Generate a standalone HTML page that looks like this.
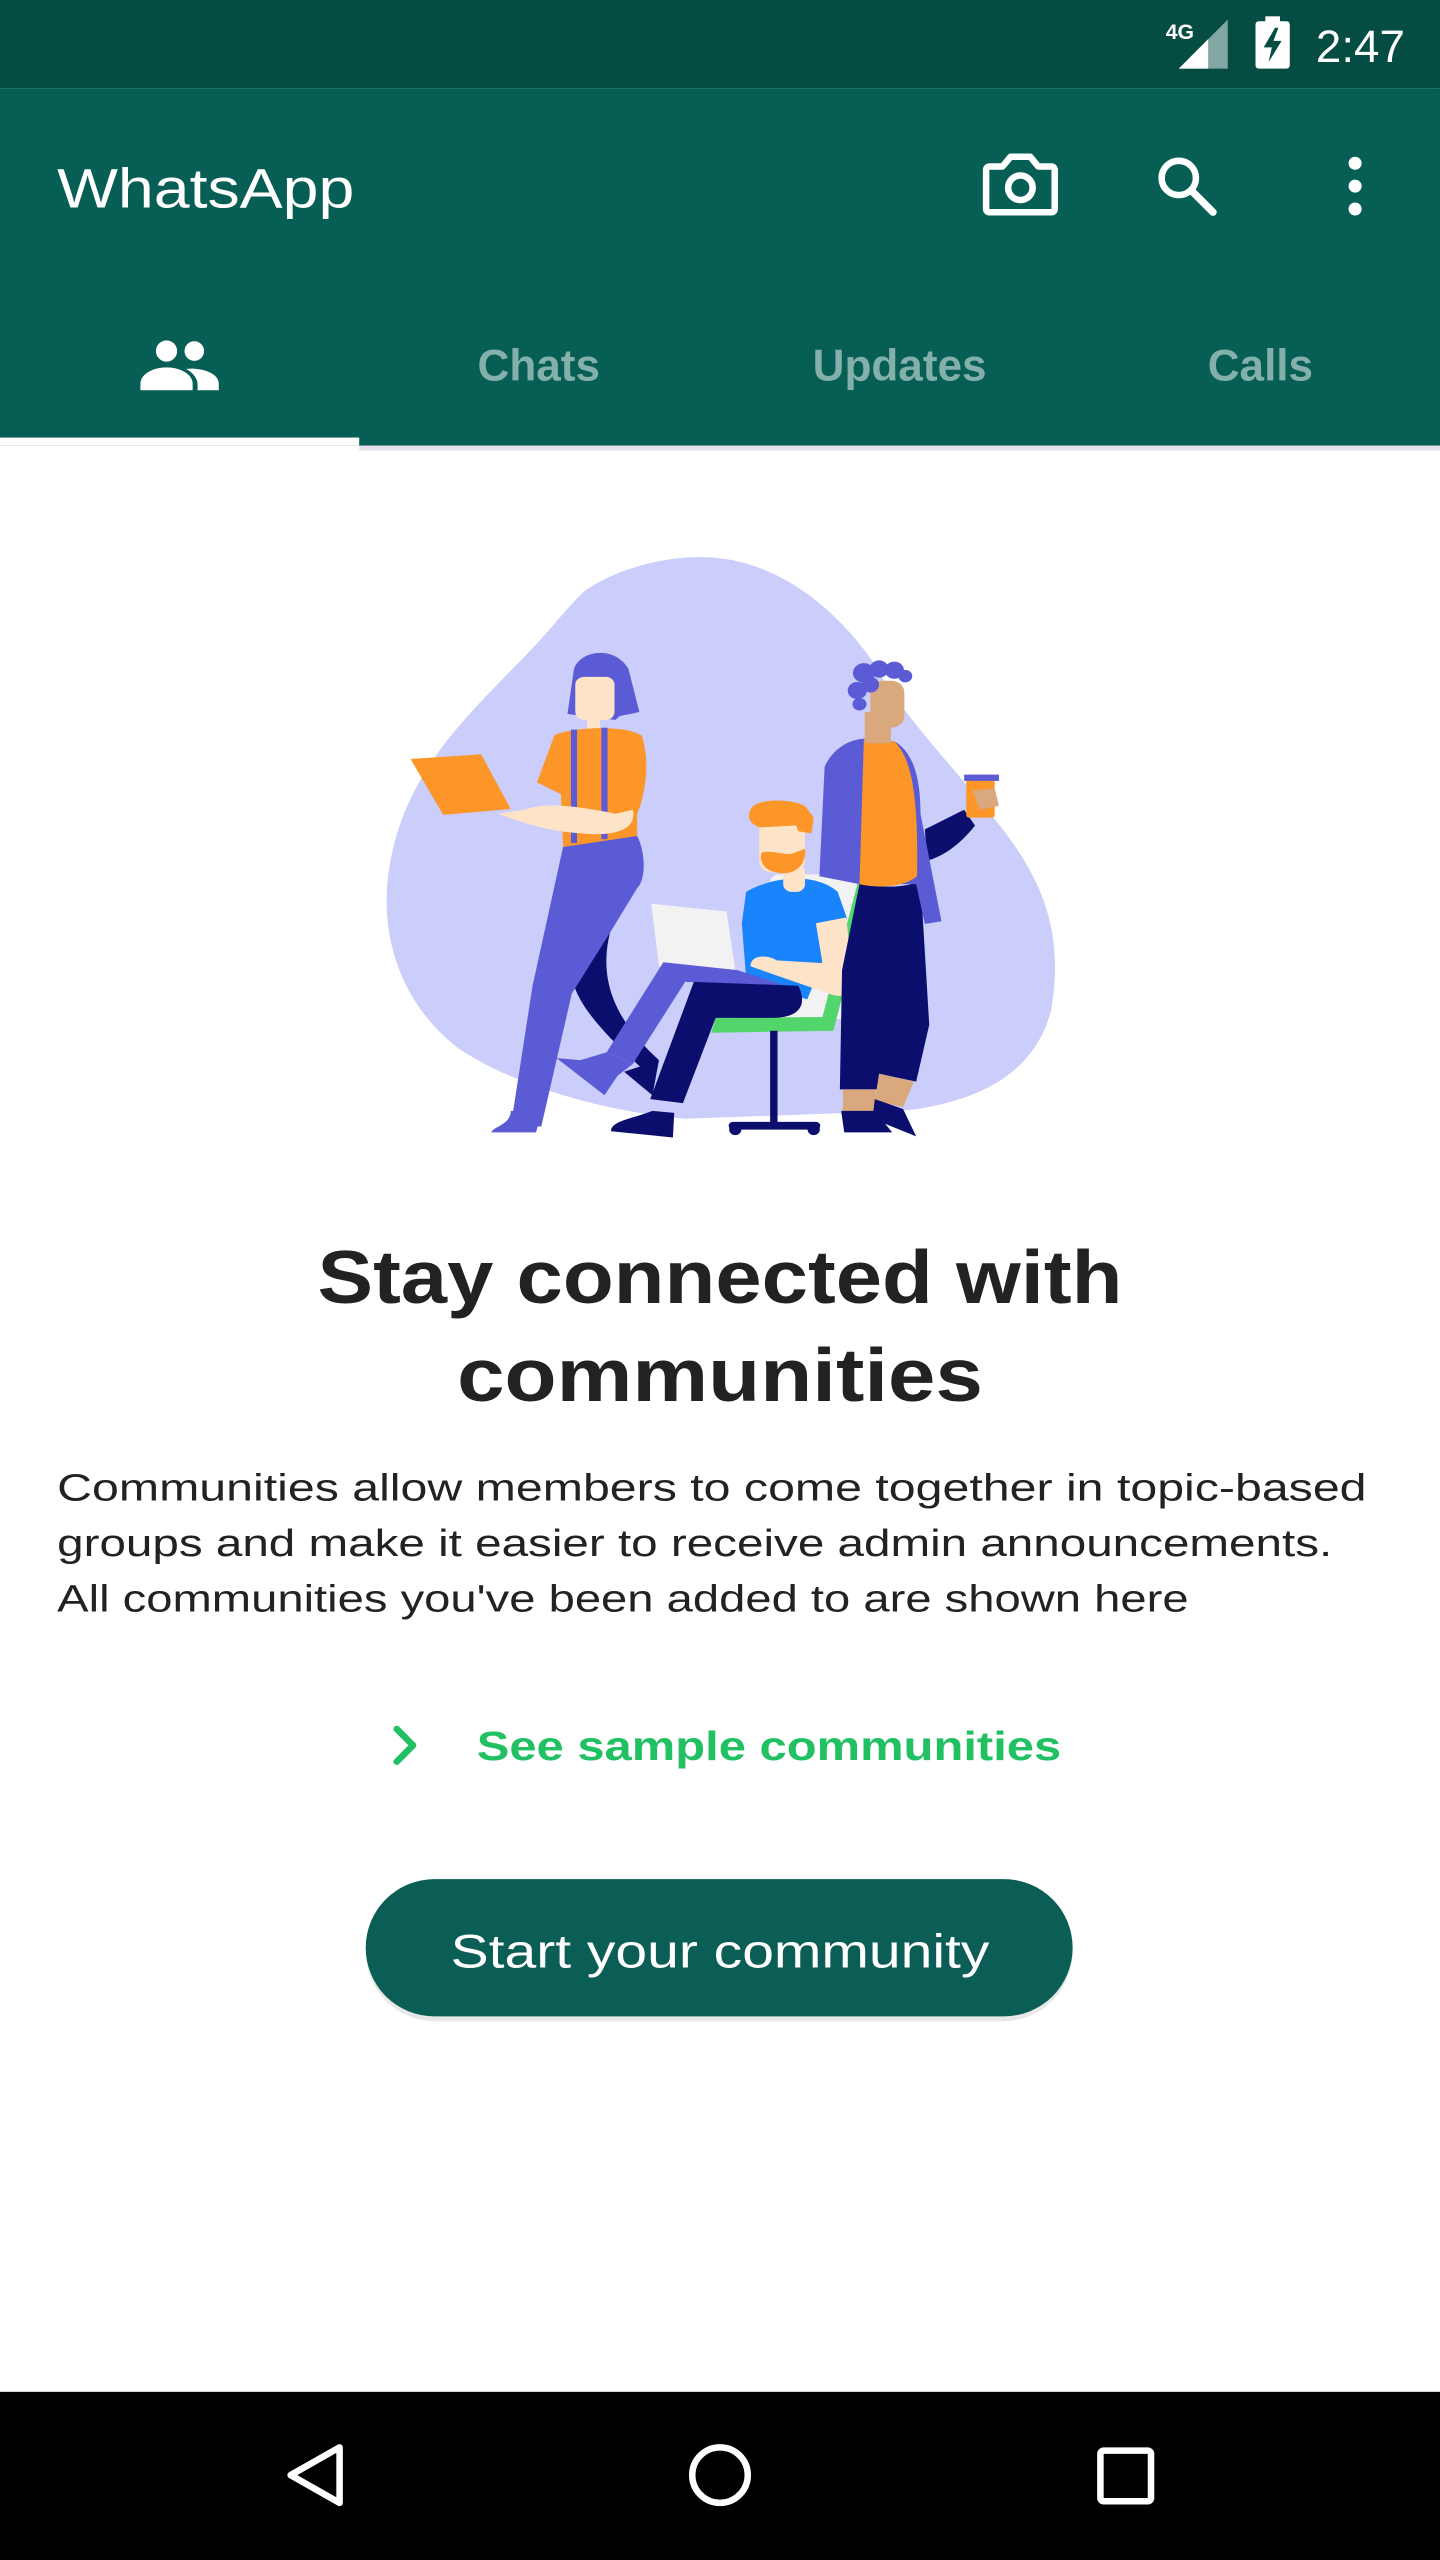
<!DOCTYPE html>
<html><head><meta charset="utf-8"><style>
html,body{margin:0;padding:0;width:1440px;height:2560px;overflow:hidden;background:#fff}
svg{display:block}
text{font-family:"Liberation Sans",sans-serif}
</style></head><body>
<svg width="1440" height="2560" viewBox="0 0 1440 2560" xmlns="http://www.w3.org/2000/svg">
<g transform="scale(1.63265)">
  <rect x="0" y="0" width="882" height="54" fill="#054c43"/>
  <rect x="0" y="54" width="882" height="219" fill="#075e54"/>
  <rect x="0" y="268" width="220" height="5" fill="#fff"/>
  <rect x="220" y="273" width="662" height="3" fill="#e8e0ec"/>
  <text x="714" y="24" font-size="13" font-weight="700" fill="#fff">4G</text>
  <polygon points="722,42 752,42 752,12" fill="#fff" opacity="0.5"/>
  <polygon points="722,42 740,42 740,24" fill="#fff"/>
  <rect x="769" y="13" width="21" height="29" rx="2" fill="#fff"/>
  <rect x="775" y="10" width="9" height="4" fill="#fff"/>
  <polygon points="781,17 774,29 779,29 777,38 785,25 780,25 783,17" fill="#054c43"/>
  <text x="806" y="38" font-size="28" fill="#fff">2:47</text>
  <text x="35" y="127" font-size="34" font-weight="500" fill="#fff" textLength="182" lengthAdjust="spacingAndGlyphs">WhatsApp</text>
  <path d="M606 102 h8 l5 -6 h12 l5 6 h8 a2 2 0 0 1 2 2 v24 a2 2 0 0 1 -2 2 h-38 a2 2 0 0 1 -2 -2 v-24 a2 2 0 0 1 2 -2z" fill="none" stroke="#fff" stroke-width="4" stroke-linejoin="round"/>
  <circle cx="625" cy="115" r="7.5" fill="none" stroke="#fff" stroke-width="4"/>
  <circle cx="722" cy="109" r="10.5" fill="none" stroke="#fff" stroke-width="4"/>
  <line x1="730" y1="117" x2="743" y2="130" stroke="#fff" stroke-width="4.5" stroke-linecap="round"/>
  <circle cx="830" cy="100" r="4" fill="#fff"/><circle cx="830" cy="114" r="4" fill="#fff"/><circle cx="830" cy="128" r="4" fill="#fff"/>
  <circle cx="102" cy="215" r="6.5" fill="#fff"/>
  <circle cx="119" cy="215" r="6" fill="#fff"/>
  <path d="M86 239 v-4 c0 -6 8 -10 16 -10 s16 4 16 10 v4z" fill="#fff"/>
  <path d="M114 226 c8 -1 20 2 20 9 v4 h-13 v-4 c0 -3 -3 -7 -7 -9z" fill="#fff"/>
  <text x="330" y="233" font-size="27" font-weight="700" fill="#83b0aa" text-anchor="middle">Chats</text>
  <text x="551" y="233" font-size="27" font-weight="700" fill="#83b0aa" text-anchor="middle">Updates</text>
  <text x="772" y="233" font-size="27" font-weight="700" fill="#83b0aa" text-anchor="middle">Calls</text>
  <text x="441" y="798" font-size="46" font-weight="700" fill="#222" text-anchor="middle" textLength="493" lengthAdjust="spacingAndGlyphs">Stay connected with</text>
  <text x="441" y="858" font-size="46" font-weight="700" fill="#222" text-anchor="middle" textLength="322" lengthAdjust="spacingAndGlyphs">communities</text>
  <text x="35" y="919" font-size="23" fill="#222" textLength="802" lengthAdjust="spacingAndGlyphs">Communities allow members to come together in topic-based</text>
  <text x="35" y="953" font-size="23" fill="#222" textLength="781" lengthAdjust="spacingAndGlyphs">groups and make it easier to receive admin announcements.</text>
  <text x="35" y="987" font-size="23" fill="#222" textLength="693" lengthAdjust="spacingAndGlyphs">All communities you've been added to are shown here</text>
  <path d="M243 1059 l10 10 l-10 10" fill="none" stroke="#21c063" stroke-width="4" stroke-linecap="round" stroke-linejoin="round"/>
  <text x="292" y="1078" font-size="25" font-weight="700" fill="#21c063" textLength="358" lengthAdjust="spacingAndGlyphs">See sample communities</text>
  <rect x="224" y="1153" width="433" height="85" rx="42.5" fill="#d9d9d9" opacity="0.6"/>
  <rect x="224" y="1151" width="433" height="84" rx="42" fill="#0b5e55"/>
  <text x="441" y="1205" font-size="29" fill="#fff" text-anchor="middle" textLength="330" lengthAdjust="spacingAndGlyphs">Start your community</text>
  <rect x="0" y="1465" width="882" height="103" fill="#000"/>
  <path d="M208 1499 L178 1516 L208 1533 Z" fill="none" stroke="#fff" stroke-width="4" stroke-linejoin="round"/>
  <circle cx="441" cy="1516" r="17" fill="none" stroke="#fff" stroke-width="4"/>
  <rect x="674" y="1501" width="31" height="31" rx="2" fill="none" stroke="#fff" stroke-width="4"/>
</g>
<svg x="380" y="540" width="680" height="610" viewBox="0 0 1560 1560" preserveAspectRatio="none" overflow="visible">
  <path d="M470,130 C560,60 700,30 800,50 C950,80 1060,200 1130,310 C1200,450 1300,560 1400,700 C1520,860 1570,1000 1540,1200 C1500,1380 1350,1440 1200,1460 L700,1480 C500,1460 300,1390 180,1300 C40,1180 0,1000 20,850 C50,600 200,450 330,300 C400,220 430,170 470,130 Z" fill="#cbcdfb"/>
  <path d="M540,960 C500,1080 510,1200 640,1330 L600,1350 C480,1230 430,1150 440,1080Z" fill="#0c0e6e"/>
  <path d="M445,330 C460,280 540,270 570,330 L595,440 L550,450 L540,460 L430,445 Z" fill="#5b5bd6"/>
  <rect x="448" y="350" width="90" height="110" rx="20" fill="#fde3c8"/>
  <rect x="475" y="440" width="30" height="50" fill="#fde3c8"/>
  <path d="M400,500 C430,480 560,470 600,500 C620,560 610,650 590,700 L590,760 L420,785 L415,650 L360,620 Z" fill="#fc9628"/>
  <rect x="438" y="485" width="14" height="290" fill="#5b5bd6"/>
  <rect x="508" y="480" width="14" height="285" fill="#5b5bd6"/>
  <path d="M420,785 L590,757 C610,800 610,870 590,890 L530,1000 L440,1160 L370,1500 L300,1500 L350,1140 Z" fill="#5b5bd6"/>
  <path d="M300,1460 L370,1465 L358,1515 L255,1515 C260,1500 300,1495 300,1460Z" fill="#5b5bd6"/>
  <path d="M270,700 L330,690 C380,670 450,680 540,700 L580,690 C590,740 540,760 460,750 C380,745 320,720 270,700Z" fill="#fde3c8"/>
  <polygon points="70,560 232,548 300,688 145,703" fill="#fc9628"/>
  <rect x="895" y="855" width="210" height="370" rx="20" fill="#f2f2f2"/>
  <path d="M1100,860 L1130,870 L1040,1255 L760,1260 L770,1222 L1015,1220 Z" fill="#52d56a"/>
  <rect x="895" y="1255" width="17" height="245" fill="#0c0e6e"/>
  <rect x="800" y="1488" width="210" height="20" rx="10" fill="#0c0e6e"/>
  <circle cx="815" cy="1508" r="14" fill="#0c0e6e"/><circle cx="995" cy="1508" r="14" fill="#0c0e6e"/>
  <path d="M840,900 C900,860 1000,850 1050,900 L1072,970 L1005,985 L1015,1080 L980,1175 L840,1120 L830,980 Z" fill="#1a84fc"/>
  <rect x="925" y="830" width="50" height="70" rx="20" fill="#fde3c8"/>
  <rect x="870" y="700" width="105" height="150" rx="30" fill="#fde3c8"/>
  <path d="M875,800 C900,790 930,810 950,800 L975,790 C980,840 940,860 910,850 C880,845 870,820 875,800Z" fill="#fc9628"/>
  <path d="M850,690 C860,660 940,660 975,680 L995,710 L990,750 L960,745 L955,730 L870,735 C840,720 845,700 850,690Z" fill="#fc9628"/>
  <polygon points="622,930 795,950 815,1100 640,1090" fill="#f2f2f2"/>
  <path d="M1000,980 L1070,965 L1085,1140 C1080,1170 1050,1170 1030,1160 L900,1110 L850,1090 C850,1060 890,1060 910,1075 L1015,1082 Z" fill="#fde3c8"/>
  <path d="M650,1080 L820,1100 L930,1140 L700,1130 L580,1340 L520,1310 Z" fill="#5b5bd6"/>
  <path d="M520,1310 L580,1340 L545,1370 L515,1420 L405,1325 L460,1330 Z" fill="#5b5bd6"/>
  <path d="M720,1130 L960,1140 C985,1200 950,1222 900,1222 L770,1222 L695,1440 L620,1430 Z" fill="#0c0e6e"/>
  <path d="M560,1360 L640,1330 L625,1420 Z" fill="#0c0e6e"/>
  <path d="M625,1460 L675,1465 L672,1528 L530,1512 C530,1485 580,1480 625,1460Z" fill="#0c0e6e"/>
  <path d="M1250,740 L1340,690 L1365,730 C1330,780 1290,810 1255,820Z" fill="#0c0e6e"/>
  <rect x="1345" y="600" width="65" height="110" rx="6" fill="#fc9628"/>
  <rect x="1340" y="600" width="80" height="16" fill="#5b5bd6"/>
  <path d="M1360,640 L1410,635 L1420,680 L1375,690 Z" fill="#d9a87c"/>
  <path d="M1100,880 C1150,890 1210,890 1240,870 L1260,1240 L1230,1385 L1145,1365 L1140,1405 L1055,1405 L1060,1100 Z" fill="#0c0e6e"/>
  <rect x="1062" y="1405" width="75" height="60" fill="#d9a87c"/>
  <path d="M1145,1365 L1225,1385 L1200,1450 L1135,1435 Z" fill="#d9a87c"/>
  <path d="M1058,1460 L1135,1460 L1175,1515 L1065,1515Z" fill="#0c0e6e"/>
  <path d="M1135,1430 L1200,1455 L1230,1525 L1130,1480Z" fill="#0c0e6e"/>
  <path d="M1020,580 C1040,530 1080,510 1110,508 L1180,515 C1220,540 1240,600 1240,700 L1288,975 L1250,982 L1230,880 L1100,880 L1008,860 Z" fill="#5b5bd6"/>
  <path d="M1110,510 L1180,515 C1220,560 1235,650 1232,860 C1200,890 1140,890 1100,880 Z" fill="#fc9628"/>
  <rect x="1112" y="440" width="60" height="80" fill="#d9a87c"/>
  <rect x="1125" y="360" width="78" height="120" rx="30" fill="#d9a87c"/>
  <g fill="#5b5bd6">
    <circle cx="1110" cy="340" r="25"/><circle cx="1145" cy="330" r="22"/><circle cx="1180" cy="333" r="22"/><circle cx="1205" cy="348" r="16"/>
    <circle cx="1095" cy="385" r="22"/><circle cx="1100" cy="420" r="16"/><circle cx="1125" cy="370" r="20"/>
  </g>
</svg>
</svg>
</body></html>
